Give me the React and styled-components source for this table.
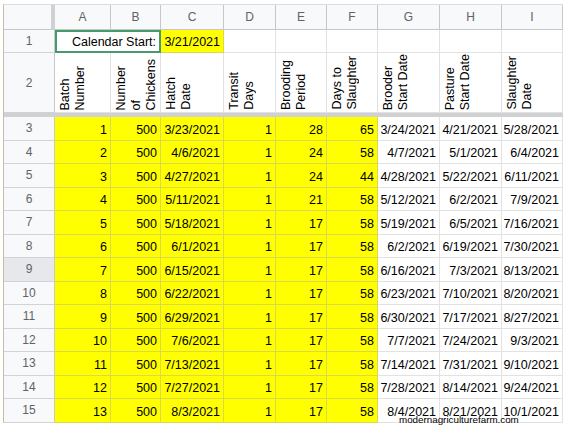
import React from "react";
import styled, { createGlobalStyle } from "styled-components";

const GlobalStyle = createGlobalStyle`
  html, body { margin: 0; padding: 0; background: #fff; }
  body { font-family: "Liberation Sans", Arial, sans-serif; }
`;

// sheet geometry
const COLS = ["A", "B", "C", "D", "E", "F", "G", "H", "I"];

const Page = styled.div`
  position: relative;
  width: 565px;
  height: 431px;
  overflow: hidden;
  box-sizing: border-box;
  padding: 4px 0 0 3px;
  background: #fff;
`;

const Grid = styled.div`
  display: grid;
  grid-template-columns: 51px 56px 50px 63px 52px 51px 51px 62px 62px 61px;
  grid-template-rows: 25px 23px 60px 4px repeat(13, 23.5px);
  width: max-content;
  border-left: 1px solid #c4bf9f;
  border-top: 1px solid #dadce0;
`;

const ColHead = styled.div`
  box-sizing: border-box;
  display: flex;
  align-items: center;
  justify-content: center;
  background: #f8f9fa;
  color: #5f6368;
  font-size: 12px;
  border-bottom: 1px solid #c7c7c7;
  border-right: ${p => (p.$corner ? "4px solid #cfd1d3" : "1px solid #c7c7c7")};
`;

const RowHead = styled.div`
  box-sizing: border-box;
  display: flex;
  align-items: center;
  justify-content: center;
  background: ${p => (p.$active ? "#e6e8eb" : "#f8f9fa")};
  color: #5f6368;
  font-size: 12px;
  border-right: 1px solid #c7c7c7;
  border-bottom: 1px solid #d3d3d3;
`;

const Cell = styled.div`
  box-sizing: border-box;
  display: flex;
  align-items: flex-end;
  justify-content: flex-end;
  padding: 0 3px 2px;
  font-size: 12.5px;
  line-height: 16px;
  color: #000;
  white-space: nowrap;
  overflow: hidden;
  background: ${p => (p.$yellow ? "#ffff00" : "#fff")};
  border-right: 1px solid ${p => (p.$yellow ? "#d9d94c" : "#e2e2e2")};
  border-bottom: 1px solid ${p => (p.$yellow ? "#d9d94c" : "#e2e2e2")};
`;

const MergedCell = styled(Cell)`
  grid-column: span 2;
  padding: 0 3px 1px;
  border: 2px solid #469b6c;
`;

const LabelCell = styled(Cell)`
  justify-content: flex-start;
  overflow: visible;
  padding: 0 0 2px 3px;
`;

const Rotated = styled.div`
  writing-mode: vertical-rl;
  transform: rotate(180deg);
  white-space: nowrap;
  font-size: 12.5px;
  line-height: 15px;
`;

const FreezeBar = styled.div`
  grid-column: 1 / -1;
  background: #cfd1d3;
`;

const Watermark = styled.div`
  position: absolute;
  left: 399px;
  top: 414px;
  font-size: 9.8px;
  color: #000;
  white-space: nowrap;
`;

const labels = [
  ["Batch", "Number"],
  ["Number", "of", "Chickens"],
  ["Hatch", "Date"],
  ["Transit", "Days"],
  ["Brooding", "Period"],
  ["Days to", "Slaughter"],
  ["Brooder", "Start Date"],
  ["Pasture", "Start Date"],
  ["Slaughter", "Date"],
];

const rows = [
  ["1", "500", "3/23/2021", "1", "28", "65", "3/24/2021", "4/21/2021", "5/28/2021"],
  ["2", "500", "4/6/2021", "1", "24", "58", "4/7/2021", "5/1/2021", "6/4/2021"],
  ["3", "500", "4/27/2021", "1", "24", "44", "4/28/2021", "5/22/2021", "6/11/2021"],
  ["4", "500", "5/11/2021", "1", "21", "58", "5/12/2021", "6/2/2021", "7/9/2021"],
  ["5", "500", "5/18/2021", "1", "17", "58", "5/19/2021", "6/5/2021", "7/16/2021"],
  ["6", "500", "6/1/2021", "1", "17", "58", "6/2/2021", "6/19/2021", "7/30/2021"],
  ["7", "500", "6/15/2021", "1", "17", "58", "6/16/2021", "7/3/2021", "8/13/2021"],
  ["8", "500", "6/22/2021", "1", "17", "58", "6/23/2021", "7/10/2021", "8/20/2021"],
  ["9", "500", "6/29/2021", "1", "17", "58", "6/30/2021", "7/17/2021", "8/27/2021"],
  ["10", "500", "7/6/2021", "1", "17", "58", "7/7/2021", "7/24/2021", "9/3/2021"],
  ["11", "500", "7/13/2021", "1", "17", "58", "7/14/2021", "7/31/2021", "9/10/2021"],
  ["12", "500", "7/27/2021", "1", "17", "58", "7/28/2021", "8/14/2021", "9/24/2021"],
  ["13", "500", "8/3/2021", "1", "17", "58", "8/4/2021", "8/21/2021", "10/1/2021"],
];

export default function App() {
  return (
    <Page>
      <GlobalStyle />
      <Grid>
        {/* column letters */}
        <ColHead $corner />
        {COLS.map(c => (
          <ColHead key={c}>{c}</ColHead>
        ))}

        {/* row 1 */}
        <RowHead>1</RowHead>
        <MergedCell>Calendar Start:</MergedCell>
        <Cell $yellow>3/21/2021</Cell>
        {COLS.slice(3).map(c => (
          <Cell key={c} />
        ))}

        {/* row 2: rotated labels */}
        <RowHead>2</RowHead>
        {labels.map((l, i) => (
          <LabelCell key={i}>
            <Rotated>
              {l.map((line, j) => (
                <React.Fragment key={j}>
                  {j > 0 && <br />}
                  {line}
                </React.Fragment>
              ))}
            </Rotated>
          </LabelCell>
        ))}

        <FreezeBar />

        {rows.map((r, i) => (
          <React.Fragment key={i}>
            <RowHead $active={i + 3 === 9}>{i + 3}</RowHead>
            {r.map((v, j) => (
              <Cell key={j} $yellow={j < 6}>{v}</Cell>
            ))}
          </React.Fragment>
        ))}
      </Grid>
      <Watermark>modernagriculturefarm.com</Watermark>
    </Page>
  );
}
